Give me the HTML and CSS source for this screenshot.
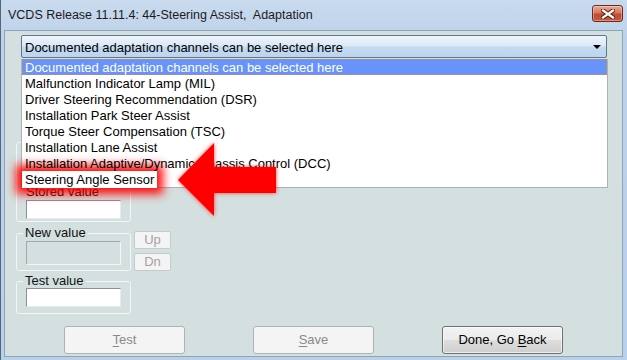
FILE: index.html
```html
<!DOCTYPE html>
<html lang="en">

<head>
  <meta charset="UTF-8" />
  <title>VCDS Release 11.11.4: 44-Steering Assist, Adaptation</title>
  <link rel="stylesheet" href="styles.css">
</head>

<body>

  <div class="window">
    <div class="titlebar">
      <div class="title">VCDS Release 11.11.4: 44-Steering Assist,&nbsp; Adaptation</div>
      <div class="close-btn">
        <svg width="14" height="10" viewBox="0 0 14 10">
          <path d="M2 1.5 L12 8.5 M12 1.5 L2 8.5" stroke="#5b1d12" stroke-width="4.2" stroke-linecap="square" />
          <path d="M2 1.5 L12 8.5 M12 1.5 L2 8.5" stroke="#fff" stroke-width="2.2" stroke-linecap="square" />
        </svg>
      </div>
    </div>

    <div class="client">
      <div class="combo">
        <span>Documented adaptation channels can be selected here</span>
        <span class="combo-arrow"></span>
      </div>

      <div class="groups">
        <div class="group group-stored">
          <div class="label">Stored value</div>
          <div class="field"></div>
        </div>

        <div class="row">
          <fieldset class="group group-new">
            <legend>New value</legend>
            <div class="field field-tall disabled"></div>
          </fieldset>
          <div class="updn">
            <div class="small-btn">Up</div>
            <div class="small-btn">Dn</div>
          </div>
        </div>

        <fieldset class="group group-test">
          <legend>Test value</legend>
          <div class="field"></div>
        </fieldset>
      </div>

      <div class="buttons">
        <div class="btn disabled"><u>T</u>est</div>
        <div class="btn disabled"><u>S</u>ave</div>
        <div class="btn">Done, Go <u>B</u>ack</div>
      </div>
    </div>

    <!-- dropdown list opened over the form -->
    <ul class="dropdown">
      <li class="selected">Documented adaptation channels can be selected here</li>
      <li>Malfunction Indicator Lamp (MIL)</li>
      <li>Driver Steering Recommendation (DSR)</li>
      <li>Installation Park Steer Assist</li>
      <li>Torque Steer Compensation (TSC)</li>
      <li>Installation Lane Assist</li>
      <li>Installation Adaptive/Dynamic Chassis Control (DCC)</li>
      <li><span class="marked">Steering Angle Sensor</span></li>
    </ul>

    <svg class="arrow" width="120" height="90" viewBox="170 135 120 90">
      <polygon points="177,180 213,143 213,167 275,167 275,193 213,193 213,216" fill="#ff0000" />
    </svg>
  </div>

</body>

</html>
```

FILE: styles.css
```css
/* Reset dan dasar */
* {
  margin: 0;
  padding: 0;
  box-sizing: border-box;
}

body {
  font-family: 'Liberation Sans', Arial, sans-serif;
  font-size: 13px;
  color: #000;
  background: #fff;
}

/* Window frame */
.window {
  position: relative;
  width: 627px;
  height: 360px;
  display: flex;
  flex-direction: column;
  background: linear-gradient(to bottom, #c9daee, #bdd2ea 40px, #b9d0ea);
  border-left: 1px solid #53667c;
  overflow: hidden;
}

.titlebar {
  height: 30px;
  display: flex;
  align-items: flex-start;
  justify-content: space-between;
  padding: 0 4px 0 7px;
}

.title {
  font-size: 12.5px;
  line-height: 14px;
  margin-top: 8px;
  color: #1b1b1b;
}

.close-btn {
  width: 31px;
  height: 17px;
  margin-top: 5px;
  border: 1px solid #6b2a1f;
  border-radius: 3px;
  background: linear-gradient(to bottom, #e9ab98, #d7765c 45%, #c24b2f 55%, #c55a3c);
  display: flex;
  align-items: center;
  justify-content: center;
  box-shadow: inset 0 0 0 1px rgba(255, 255, 255, 0.35);
}

/* Client area */
.client {
  flex: 1;
  margin: 0 4px 3px 3px;
  background: #d4dfdf;
  border: 1px solid #8fa3b9;
  padding: 4px 0 0 11px;
  display: flex;
  flex-direction: column;
}

.combo {
  width: 586px;
  height: 23px;
  margin-left: 5px;
  border: 1px solid #5d7790;
  border-radius: 2px;
  background: linear-gradient(to bottom, #eef5fc, #dbe9f7 45%, #c3daf0 55%, #bcd5ee);
  display: flex;
  align-items: center;
  justify-content: space-between;
  padding: 1px 5px 0 3px;
  line-height: 15px;
}

.combo-arrow {
  width: 0;
  height: 0;
  border-left: 4px solid transparent;
  border-right: 4px solid transparent;
  border-top: 4px solid #000;
}

/* Group boxes */
.groups {
  margin-top: 84px;
  display: flex;
  flex-direction: column;
}

.group {
  width: 115px;
  border: 1px solid #f3f6f6;
  border-radius: 3px;
  padding: 0 9px;
}

.group legend {
  line-height: 14px;
  padding: 0 2px;
  margin-left: -3px;
  color: #111;
}

.group-stored {
  height: 80px;
  display: flex;
  flex-direction: column;
  justify-content: flex-end;
  padding-bottom: 2px;
}

.group-stored .label {
  line-height: 14px;
  margin-bottom: 1px;
}

.row {
  display: flex;
  margin-top: 4px;
}

.group-new {
  padding-top: 1px;
  padding-bottom: 0;
}

.group-test {
  margin-top: 3px;
  padding-top: 0;
  padding-bottom: 6px;
}

.field {
  width: 95px;
  height: 19px;
  background: #fff;
  border: 1px solid;
  border-color: #8c8f8f #e6ecec #e6ecec #8c8f8f;
}

.field-tall {
  height: 24px;
}

.field.disabled {
  background: #d4dfdf;
  border-color: #a3a9a9 #f4f7f7 #f4f7f7 #a3a9a9;
}

.updn {
  display: flex;
  flex-direction: column;
  gap: 4px;
  margin: 5px 0 0 3px;
}

.small-btn {
  width: 37px;
  height: 18px;
  border: 1px solid #c3cccc;
  border-radius: 2px;
  background: #f4f4f4;
  color: #a3a3a3;
  text-align: center;
  line-height: 16px;
}

/* Bottom buttons */
.buttons {
  display: flex;
  gap: 68px;
  margin: 12px 0 0 48px;
}

.btn {
  width: 121px;
  height: 28px;
  border: 1px solid #707070;
  border-radius: 3px;
  background: linear-gradient(to bottom, #f2f2f2, #ebebeb 48%, #dddddd 52%, #cfcfcf);
  text-align: center;
  line-height: 26px;
  box-shadow: inset 0 0 0 1px rgba(255, 255, 255, 0.6);
}

.btn u {
  text-decoration: underline;
  text-underline-offset: 2px;
}

.btn.disabled {
  background: #f4f4f4;
  border-color: #adb2b5;
  color: #8a8a8a;
  box-shadow: none;
}

/* Dropdown list */
.dropdown {
  position: absolute;
  z-index: 1;
  left: 20px;
  top: 59px;
  width: 587px;
  list-style: none;
  background: #fff;
  border: 1px solid #a9b3bd;
  border-top: none;
}

.dropdown li {
  height: 16px;
  line-height: 17px;
  padding-left: 3px;
  white-space: nowrap;
}

.dropdown li.selected {
  background: #6893fa;
  color: #fff;
  outline: 1px dotted #d08a3a;
  outline-offset: -1px;
}

.marked {
  position: relative;
  z-index: -1;
  display: inline-block;
  margin-left: -3px;
  padding: 0 3px;
  background: #fff;
  box-shadow: 0 0 10px 6px rgba(255, 0, 0, 0.95);
}

.arrow {
  position: absolute;
  z-index: 2;
  left: 170px;
  top: 135px;
  filter: drop-shadow(0 0 2px rgba(255, 0, 0, 0.7));
}
```
